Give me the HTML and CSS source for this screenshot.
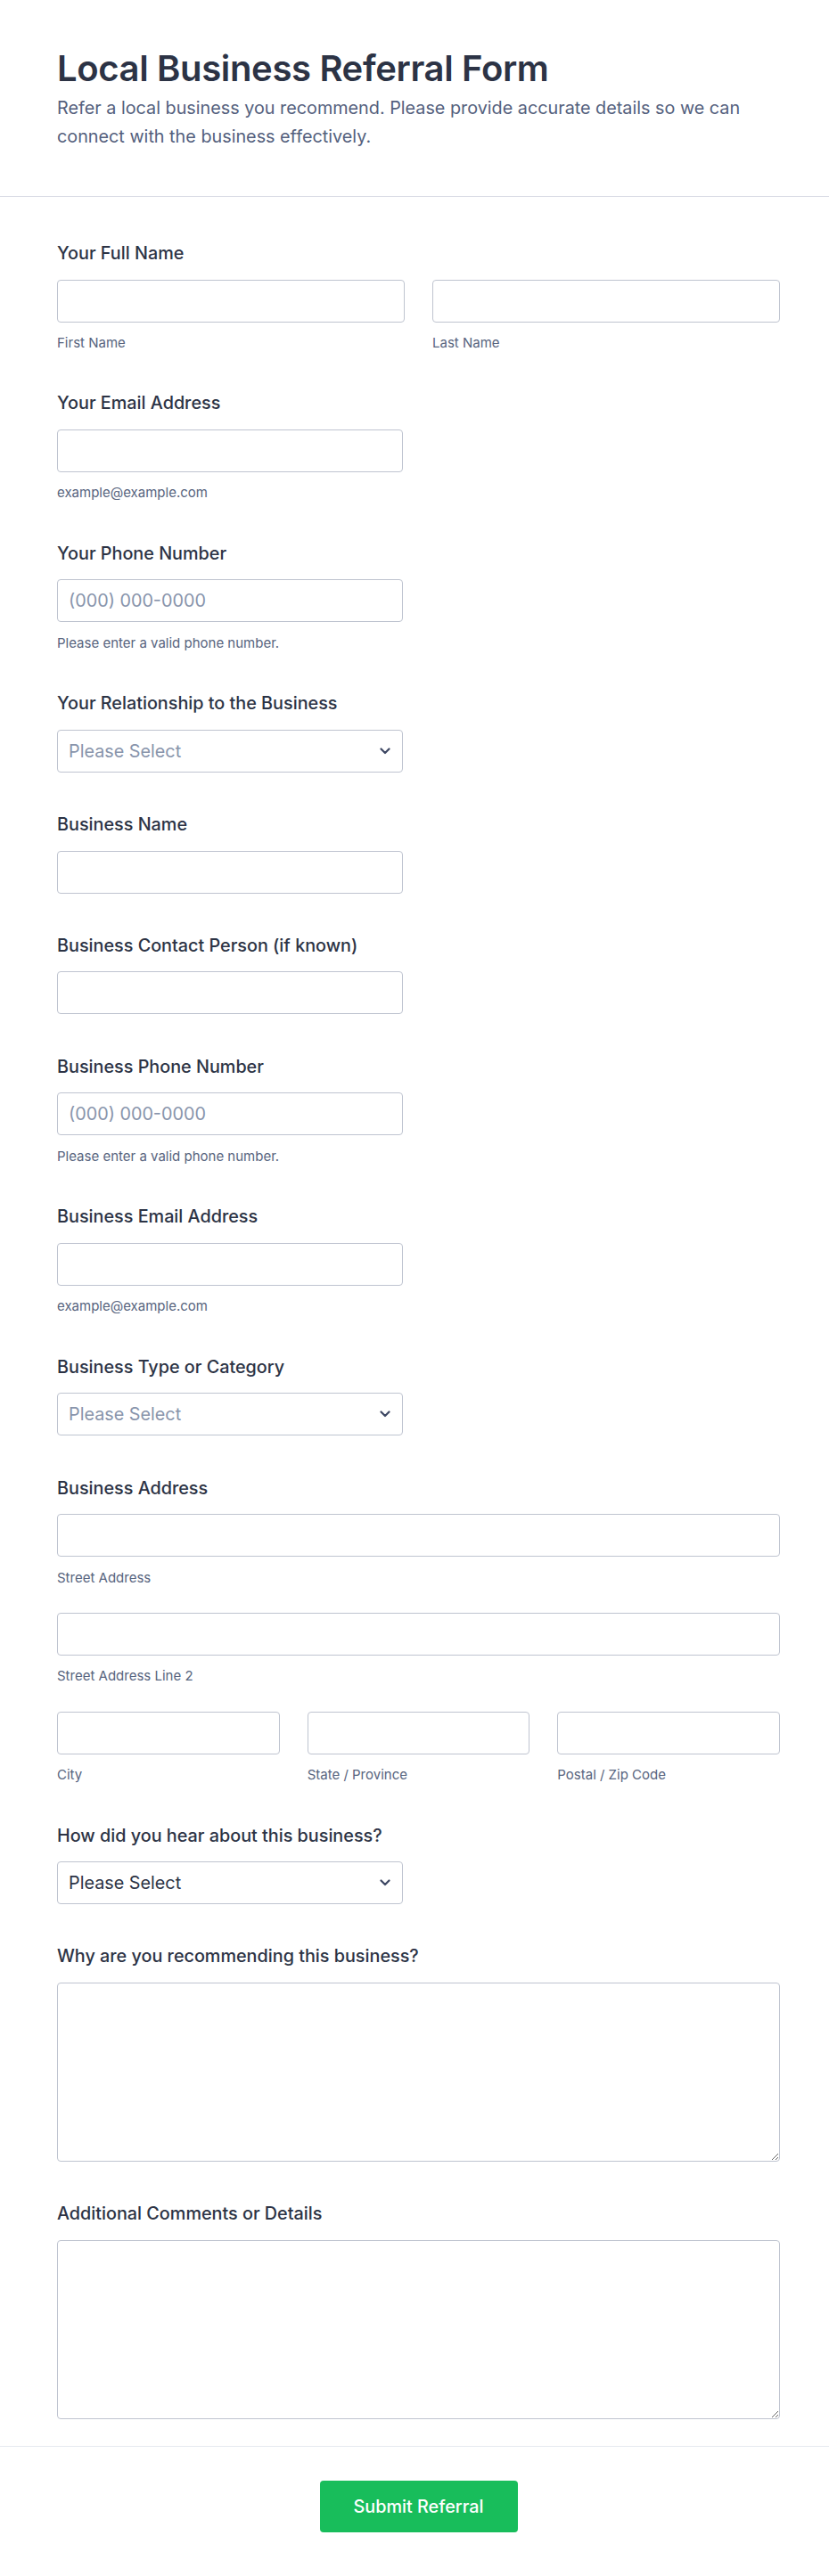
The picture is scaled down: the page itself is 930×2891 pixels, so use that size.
FILE: index.html
```html
<!DOCTYPE html>
<html lang="en">
<head>
<meta charset="utf-8">
<title>Local Business Referral Form</title>
<link rel="stylesheet" href="styles.css">
</head>
<body>
<header class="form-header">
  <h1 class="title">Local Business Referral Form</h1>
  <p class="subtitle">Refer a local business you recommend. Please provide accurate details so we can connect with the business effectively.</p>
</header>

<form class="form-body">
  <div class="field">
    <label class="label">Your Full Name</label>
    <div class="row row-2">
      <div class="col"><input class="input" type="text"><span class="sub">First Name</span></div>
      <div class="col"><input class="input" type="text"><span class="sub">Last Name</span></div>
    </div>
  </div>

  <div class="field">
    <label class="label">Your Email Address</label>
    <input class="input half" type="email">
    <span class="sub">example@example.com</span>
  </div>

  <div class="field">
    <label class="label">Your Phone Number</label>
    <input class="input half" type="tel" placeholder="(000) 000-0000">
    <span class="sub">Please enter a valid phone number.</span>
  </div>

  <div class="field">
    <label class="label">Your Relationship to the Business</label>
    <div class="select-wrap half">
      <select class="input select muted"><option>Please Select</option></select>
      <svg class="chev" width="12" height="8" viewBox="0 0 12 8"><path d="M1.5 1.5 L6 6 L10.5 1.5" fill="none" stroke="#3d4763" stroke-width="2.2" stroke-linecap="round" stroke-linejoin="round"/></svg>
    </div>
  </div>

  <div class="field">
    <label class="label">Business Name</label>
    <input class="input half" type="text">
  </div>

  <div class="field">
    <label class="label">Business Contact Person (if known)</label>
    <input class="input half" type="text">
  </div>

  <div class="field">
    <label class="label">Business Phone Number</label>
    <input class="input half" type="tel" placeholder="(000) 000-0000">
    <span class="sub">Please enter a valid phone number.</span>
  </div>

  <div class="field">
    <label class="label">Business Email Address</label>
    <input class="input half" type="email">
    <span class="sub">example@example.com</span>
  </div>

  <div class="field">
    <label class="label">Business Type or Category</label>
    <div class="select-wrap half">
      <select class="input select muted"><option>Please Select</option></select>
      <svg class="chev" width="12" height="8" viewBox="0 0 12 8"><path d="M1.5 1.5 L6 6 L10.5 1.5" fill="none" stroke="#3d4763" stroke-width="2.2" stroke-linecap="round" stroke-linejoin="round"/></svg>
    </div>
  </div>

  <div class="field">
    <label class="label">Business Address</label>
    <div class="addr">
      <div class="col"><input class="input" type="text"><span class="sub">Street Address</span></div>
      <div class="col"><input class="input" type="text"><span class="sub">Street Address Line 2</span></div>
      <div class="row row-3">
        <div class="col"><input class="input" type="text"><span class="sub">City</span></div>
        <div class="col"><input class="input" type="text"><span class="sub">State / Province</span></div>
        <div class="col"><input class="input" type="text"><span class="sub">Postal / Zip Code</span></div>
      </div>
    </div>
  </div>

  <div class="field">
    <label class="label">How did you hear about this business?</label>
    <div class="select-wrap half">
      <select class="input select"><option>Please Select</option></select>
      <svg class="chev" width="12" height="8" viewBox="0 0 12 8"><path d="M1.5 1.5 L6 6 L10.5 1.5" fill="none" stroke="#3d4763" stroke-width="2.2" stroke-linecap="round" stroke-linejoin="round"/></svg>
    </div>
  </div>

  <div class="field">
    <label class="label">Why are you recommending this business?</label>
    <textarea class="input textarea"></textarea>
  </div>

  <div class="field">
    <label class="label">Additional Comments or Details</label>
    <textarea class="input textarea"></textarea>
  </div>
</form>

<footer class="form-footer">
  <button class="submit" type="button">Submit Referral</button>
</footer>
</body>
</html>
```

FILE: styles.css
```css
* { box-sizing: border-box; }

html, body {
  margin: 0;
  padding: 0;
  background: #ffffff;
}

body {
  font-family: Inter, "Noto Sans", sans-serif;
  color: #2c3345;
}

.form-header {
  padding: 53px 55px 51px 64px;
  border-bottom: 1px solid #dadce5;
}

.title {
  margin: 0;
  font-size: 40px;
  line-height: 48px;
  font-weight: 600;
  letter-spacing: -0.35px;
  color: #2c3345;
}

.subtitle {
  margin: 5px 0 0;
  max-width: 800px;
  font-size: 19.8px;
  line-height: 31.5px;
  color: #545f7d;
}

.form-body {
  display: flex;
  flex-direction: column;
  gap: 46.4px;
  padding: 51px 55px 30px 64px;
}

.field {
  display: flex;
  flex-direction: column;
  align-items: flex-start;
}

.label {
  display: block;
  font-size: 19.8px;
  line-height: 24px;
  font-weight: 500;
  color: #2c3345;
  margin-bottom: 17.5px;
}

.row {
  display: grid;
  column-gap: 31px;
  width: 100%;
}

.row-2 { grid-template-columns: 1fr 1fr; }
.row-3 { grid-template-columns: 1fr 1fr 1fr; }

.col {
  display: flex;
  flex-direction: column;
  width: 100%;
}

.addr {
  display: flex;
  flex-direction: column;
  gap: 30.3px;
  width: 100%;
}

.input {
  display: block;
  width: 100%;
  height: 48px;
  margin: 0;
  padding: 0 12px;
  border: 1px solid #bfc4d0;
  border-radius: 4px;
  background: #ffffff;
  font-family: Inter, "Noto Sans", sans-serif;
  font-size: 19.8px;
  color: #2c3345;
  outline: none;
}

.input::placeholder {
  color: #8894ab;
  opacity: 1;
}

.half { width: 388px; }

.sub {
  display: block;
  margin-top: 14.5px;
  font-size: 15px;
  line-height: 18px;
  color: #57647e;
}

.select-wrap {
  position: relative;
}

.select {
  appearance: none;
  -webkit-appearance: none;
  width: 100%;
  padding-right: 36px;
}

.select.muted { color: #8894ab; }

.chev {
  position: absolute;
  right: 14px;
  top: 20px;
  pointer-events: none;
}

.textarea {
  height: 201px;
  padding: 10px 12px;
  resize: vertical;
}

.form-footer {
  display: flex;
  justify-content: center;
  padding: 38px 55px 50px 64px;
  border-top: 1px solid #e6e9ef;
}

.submit {
  width: 222px;
  height: 58px;
  border: none;
  border-radius: 4px;
  background: #18bd5b;
  color: #ffffff;
  font-family: Inter, "Noto Sans", sans-serif;
  font-size: 19.8px;
  font-weight: 500;
  cursor: pointer;
}
```
